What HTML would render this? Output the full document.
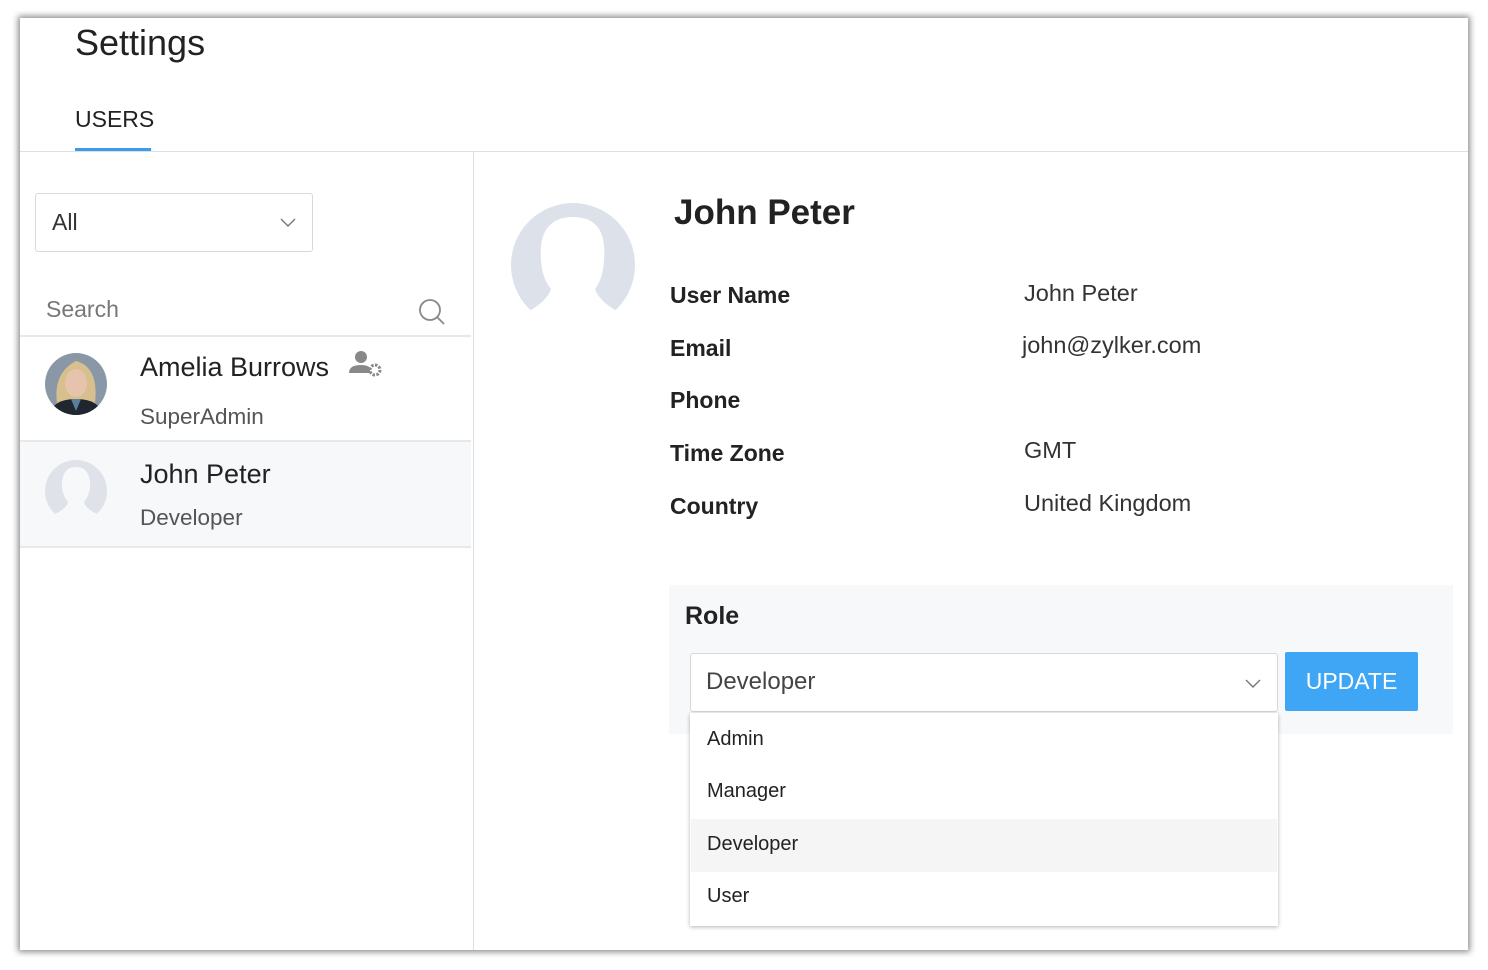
<!DOCTYPE html>
<html><head><meta charset="utf-8"><style>
*{margin:0;padding:0;box-sizing:border-box}
body{width:1488px;height:970px;background:#fff;font-family:"Liberation Sans",sans-serif;color:#222;position:relative;overflow:hidden}
.panel{position:absolute;left:20px;top:18px;width:1448px;height:932px;background:#fff;box-shadow:0 0 6px 2px rgba(0,0,0,.45)}
.a{position:absolute;white-space:nowrap}
</style></head><body>
<div class="panel"></div>
<div class="a" style="left:75px;top:22px;font-size:36px;color:#222">Settings</div>
<div class="a" style="left:75px;top:106px;font-size:23px;color:#222">USERS</div>
<div class="a" style="left:75px;top:148px;width:76px;height:4px;background:#3a9cea"></div>
<div class="a" style="left:20px;top:151px;width:1448px;height:1px;background:#dcdfe3"></div>
<div class="a" style="left:473px;top:152px;width:1px;height:798px;background:#dcdfe3"></div>

<div class="a" style="left:35px;top:193px;width:278px;height:59px;border:1px solid #d6d9dd;border-radius:3px"></div>
<div class="a" style="left:52px;top:209px;font-size:23px;color:#333">All</div>
<svg class="a" style="left:280px;top:218px" width="16" height="10"><path d="M1 1l7 7 7-7" fill="none" stroke="#777" stroke-width="1.4"/></svg>

<div class="a" style="left:46px;top:296px;font-size:23px;color:#777">Search</div>
<svg class="a" style="left:418px;top:298px" width="28" height="28"><circle cx="12" cy="12" r="10" fill="none" stroke="#888" stroke-width="1.8"/><path d="M19 19l7 7" stroke="#888" stroke-width="1.8"/></svg>
<div class="a" style="left:20px;top:335px;width:451px;height:2px;background:#e6e8eb"></div>

<svg class="a" style="left:45px;top:353px" width="62" height="62"><defs><clipPath id="c"><circle cx="31" cy="31" r="31"/></clipPath></defs><g clip-path="url(#c)"><rect width="62" height="62" fill="#8a97a6"/><path d="M12 50 Q8 20 31 8 Q54 14 50 50Z" fill="#d8c08e"/><ellipse cx="31" cy="30" rx="11" ry="14" fill="#e6c3ac"/><path d="M4 62 Q8 46 31 46 Q54 46 58 62Z" fill="#1f2630"/><path d="M26 46 L31 58 L36 46Z" fill="#5d7e9a"/></g></svg>
<div class="a" style="left:140px;top:352px;font-size:27px;color:#222">Amelia Burrows</div>
<svg class="a" style="left:348px;top:349px" width="36" height="30"><circle cx="13" cy="8" r="6" fill="#888"/><path d="M1 24q0-8 12-8q7 0 9 3v5z" fill="#888"/><circle cx="27" cy="21" r="5" fill="none" stroke="#888" stroke-width="3" stroke-dasharray="2.5 1.4"/><circle cx="27" cy="21" r="2" fill="#fff"/></svg>
<div class="a" style="left:140px;top:404px;font-size:22.5px;color:#555">SuperAdmin</div>
<div class="a" style="left:20px;top:440px;width:451px;height:2px;background:#e6e8eb"></div>

<div class="a" style="left:20px;top:442px;width:451px;height:105px;background:#f7f8fa"></div>
<div class="a" style="left:20px;top:546px;width:451px;height:2px;background:#e6e8eb"></div>
<svg class="a" style="left:45px;top:460px" width="62" height="62"><circle cx="31" cy="31" r="31" fill="#dfe2e9"/><path d="M10 62 L10 54 Q22 48 23 42 Q16 34 17 21 Q19 7 31 7 Q43 7 45 21 Q46 34 39 42 Q40 48 52 54 L52 62Z" fill="#f7f8fa"/></svg>
<div class="a" style="left:140px;top:459px;font-size:27px;color:#222">John Peter</div>
<div class="a" style="left:140px;top:505px;font-size:22.5px;color:#555">Developer</div>

<svg class="a" style="left:511px;top:203px" width="124" height="124"><circle cx="62" cy="62" r="62" fill="#dde1ea"/><path d="M18 124 L18 108 Q36 98 40 86 Q28 72 30 42 Q34 14 62 14 Q90 14 93 42 Q95 72 84 86 Q88 98 106 108 L106 124Z" fill="#fff"/></svg>
<div class="a" style="left:674px;top:193px;font-size:35px;font-weight:bold;color:#222">John Peter</div>

<div class="a" style="left:670px;top:282px;font-size:23px;font-weight:bold">User Name</div>
<div class="a" style="left:670px;top:335px;font-size:23px;font-weight:bold">Email</div>
<div class="a" style="left:670px;top:387px;font-size:23px;font-weight:bold">Phone</div>
<div class="a" style="left:670px;top:440px;font-size:23px;font-weight:bold">Time Zone</div>
<div class="a" style="left:670px;top:493px;font-size:23px;font-weight:bold">Country</div>
<div class="a" style="left:1024px;top:280px;font-size:23.5px;color:#333">John Peter</div>
<div class="a" style="left:1022px;top:332px;font-size:23.5px;color:#333">john@zylker.com</div>
<div class="a" style="left:1024px;top:437px;font-size:23.5px;color:#333">GMT</div>
<div class="a" style="left:1024px;top:490px;font-size:23.5px;color:#333">United Kingdom</div>

<div class="a" style="left:669px;top:585px;width:784px;height:149px;background:#f7f8fa"></div>
<div class="a" style="left:685px;top:602px;font-size:25px;font-weight:bold;color:#222">Role</div>
<div class="a" style="left:690px;top:653px;width:588px;height:59px;background:#fff;border:1px solid #d4d7db;border-radius:3px"></div>
<div class="a" style="left:706px;top:668px;font-size:24px;color:#444">Developer</div>
<svg class="a" style="left:1245px;top:679px" width="16" height="10"><path d="M1 1l7 7 7-7" fill="none" stroke="#777" stroke-width="1.4"/></svg>
<div class="a" style="left:1285px;top:652px;width:133px;height:59px;background:#3ea6f4;border-radius:2px;color:#fff;font-size:23px;text-align:center;line-height:59px">UPDATE</div>

<div class="a" style="left:690px;top:713px;width:588px;height:213px;background:#fff;box-shadow:0 1px 4px rgba(0,0,0,.3)"></div>
<div class="a" style="left:691px;top:819px;width:586px;height:53px;background:#f5f5f6"></div>
<div class="a" style="left:707px;top:728px;font-size:20px;color:#222">Admin</div>
<div class="a" style="left:707px;top:780px;font-size:20px;color:#222">Manager</div>
<div class="a" style="left:707px;top:833px;font-size:20px;color:#222">Developer</div>
<div class="a" style="left:707px;top:885px;font-size:20px;color:#222">User</div>
</body></html>
